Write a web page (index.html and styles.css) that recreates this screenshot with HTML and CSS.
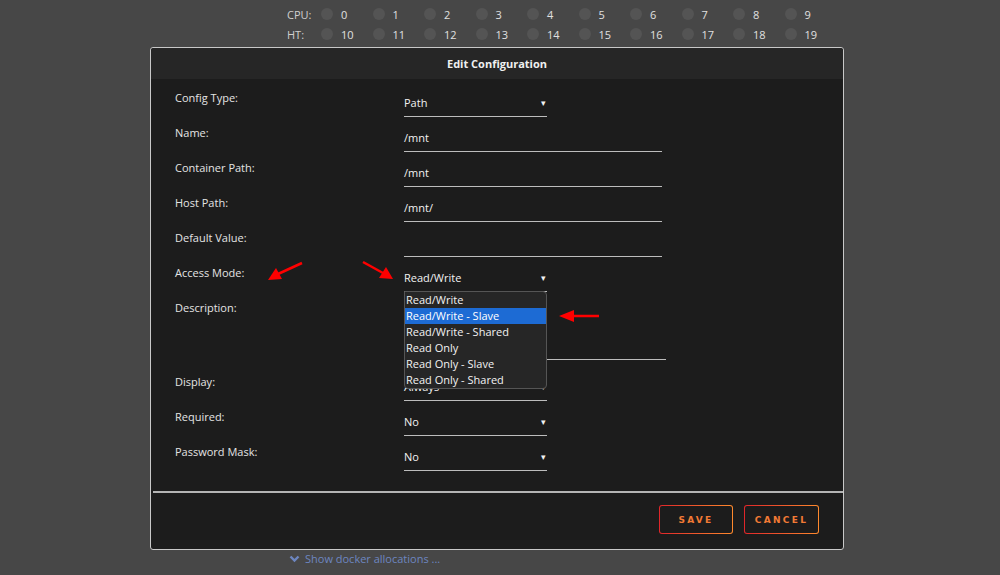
FILE: index.html
```html
<!DOCTYPE html>
<html>
<head>
    <meta charset="UTF-8">
    <title>Edit Configuration</title>
    <link rel="stylesheet" href="styles.css">
</head>
<body>
    <div class="cpu-pins">
        <div class="pin-row">
            <span class="pin-label">CPU:</span>
            <span class="pin"><i></i>0</span>
            <span class="pin"><i></i>1</span>
            <span class="pin"><i></i>2</span>
            <span class="pin"><i></i>3</span>
            <span class="pin"><i></i>4</span>
            <span class="pin"><i></i>5</span>
            <span class="pin"><i></i>6</span>
            <span class="pin"><i></i>7</span>
            <span class="pin"><i></i>8</span>
            <span class="pin"><i></i>9</span>
        </div>
        <div class="pin-row">
            <span class="pin-label">HT:</span>
            <span class="pin"><i></i>10</span>
            <span class="pin"><i></i>11</span>
            <span class="pin"><i></i>12</span>
            <span class="pin"><i></i>13</span>
            <span class="pin"><i></i>14</span>
            <span class="pin"><i></i>15</span>
            <span class="pin"><i></i>16</span>
            <span class="pin"><i></i>17</span>
            <span class="pin"><i></i>18</span>
            <span class="pin"><i></i>19</span>
        </div>
    </div>

    <div class="dialog">
        <div class="dialog-title">Edit Configuration</div>
        <div class="dialog-body">
            <div class="row">
                <label>Config Type:</label>
                <div class="field select">Path<span class="caret">&#9662;</span></div>
            </div>
            <div class="row">
                <label>Name:</label>
                <div class="field text">/mnt</div>
            </div>
            <div class="row">
                <label>Container Path:</label>
                <div class="field text">/mnt</div>
            </div>
            <div class="row">
                <label>Host Path:</label>
                <div class="field text">/mnt/</div>
            </div>
            <div class="row">
                <label>Default Value:</label>
                <div class="field text">&nbsp;</div>
            </div>
            <div class="row">
                <label>Access Mode:</label>
                <div class="field select open">Read/Write<span class="caret">&#9662;</span>
                    <ul class="options">
                        <li>Read/Write</li>
                        <li class="active">Read/Write - Slave</li>
                        <li>Read/Write - Shared</li>
                        <li>Read Only</li>
                        <li>Read Only - Slave</li>
                        <li>Read Only - Shared</li>
                    </ul>
                </div>
            </div>
            <div class="row tall">
                <label>Description:</label>
                <div class="field area">&nbsp;</div>
            </div>
            <div class="row">
                <label>Display:</label>
                <div class="field select">Always<span class="caret">&#9662;</span></div>
            </div>
            <div class="row">
                <label>Required:</label>
                <div class="field select">No<span class="caret">&#9662;</span></div>
            </div>
            <div class="row">
                <label>Password Mask:</label>
                <div class="field select">No<span class="caret">&#9662;</span></div>
            </div>
        </div>
        <div class="dialog-buttons">
            <button>SAVE</button>
            <button>CANCEL</button>
        </div>

        <!-- annotation arrows -->
        <svg class="arrow arrow-a" width="40" height="24" viewBox="0 0 40 24">
            <line x1="36" y1="3" x2="12" y2="14" stroke="#f00" stroke-width="2.5"/>
            <polygon points="2,20 10,8 16,19" fill="#f00"/>
        </svg>
        <svg class="arrow arrow-b" width="36" height="24" viewBox="0 0 36 24">
            <line x1="2" y1="3" x2="22" y2="14" stroke="#f00" stroke-width="2.5"/>
            <polygon points="32,20 18,19 25,8" fill="#f00"/>
        </svg>
        <svg class="arrow arrow-c" width="44" height="16" viewBox="0 0 44 16">
            <line x1="42" y1="8" x2="14" y2="8" stroke="#f00" stroke-width="2.5"/>
            <polygon points="2,8 17,2 17,14" fill="#f00"/>
        </svg>
    </div>

    <div class="allocations">
        <svg width="11" height="8" viewBox="0 0 11 8"><polyline points="1.5,1.5 5.5,5.5 9.5,1.5" fill="none" stroke="#6d86c0" stroke-width="2.4"/></svg>
        Show docker allocations ...
    </div>
</body>
</html>
```

FILE: styles.css
```css
body {
    margin: 0;
    background: #474747;
    font-family: "Open Sans", "Noto Sans", sans-serif;
    font-size: 11px;
    color: #e4e4e4;
    height: 575px;
    overflow: hidden;
}

.cpu-pins { padding: 4px 0 0 287px; height: 47px; box-sizing: border-box; }
.pin-row { display: flex; align-items: center; height: 20px; }
.pin-label { width: 34px; color: #d0d0d0; }
.pin { display: flex; align-items: center; width: 51.5px; color: #e0e0e0; }
.pin i {
    display: inline-block; width: 12px; height: 12px; border-radius: 50%;
    background: #545454; margin-right: 8px;
}

.dialog {
    position: relative;
    margin-left: 150px;
    width: 694px;
    height: 503px;
    box-sizing: border-box;
    border: 1px solid #c8c8c8;
    border-radius: 3px;
    background: #1c1c1c;
}
.dialog-title {
    height: 31px; line-height: 31px;
    background: #262626;
    border-radius: 3px 3px 0 0;
    text-align: center; font-weight: bold; color: #f0f0f0;
}
.dialog-body { padding: 11px 0 12px 22px; border-bottom: 2px solid #b4b4b4; margin-left: 2px; }

.row { display: grid; grid-template-columns: 229px 1fr; height: 35px; }
.row.tall { height: 74px; }
.row label { line-height: 16px; }

.field {
    position: relative;
    margin-top: 5px;
    line-height: 16px;
    height: 22px;
    box-sizing: border-box;
    border-bottom: 1px solid #bdbdbd;
    color: #f2f2f2;
}
.field.select { width: 143px; }
.field.text { width: 258px; }
.field.area { width: 262px; height: 55px; }
.caret { position: absolute; right: 1px; top: 0; font-size: 9px; }

.options {
    position: absolute; left: 0; top: 21px; z-index: 2;
    width: 143px; margin: 0; padding: 0; list-style: none;
    box-sizing: border-box;
    border: 1px solid #555; border-radius: 0 4px 4px 4px;
    background: #262626;
}
.options li { height: 16px; line-height: 16px; padding-left: 1px; white-space: nowrap; }
.options li.active { background: #1d6bd4; color: #fff; }

.dialog-buttons { display: flex; justify-content: flex-end; gap: 11px; padding: 12px 24px 0 0; }
.dialog-buttons button {
    width: 74px; height: 29px;
    border: 1px solid transparent; border-radius: 3px;
    background: linear-gradient(#1c1c1c, #1c1c1c) padding-box,
                linear-gradient(90deg, #e0262a, #ff8a2d) border-box;
    color: #f27a35;
    font-family: "DejaVu Sans", sans-serif; font-size: 9px; font-weight: bold;
    letter-spacing: 2.3px;
}
.dialog-buttons button + button { width: 75px; }

.arrow { position: absolute; }
.arrow-a { left: 115px; top: 212px; }
.arrow-b { left: 210px; top: 211px; }
.arrow-c { left: 406px; top: 260px; }

.allocations {
    display: flex; align-items: center; gap: 5px;
    margin: 1px 0 0 289px;
    color: #6d86c0; font-size: 11px;
}
```
